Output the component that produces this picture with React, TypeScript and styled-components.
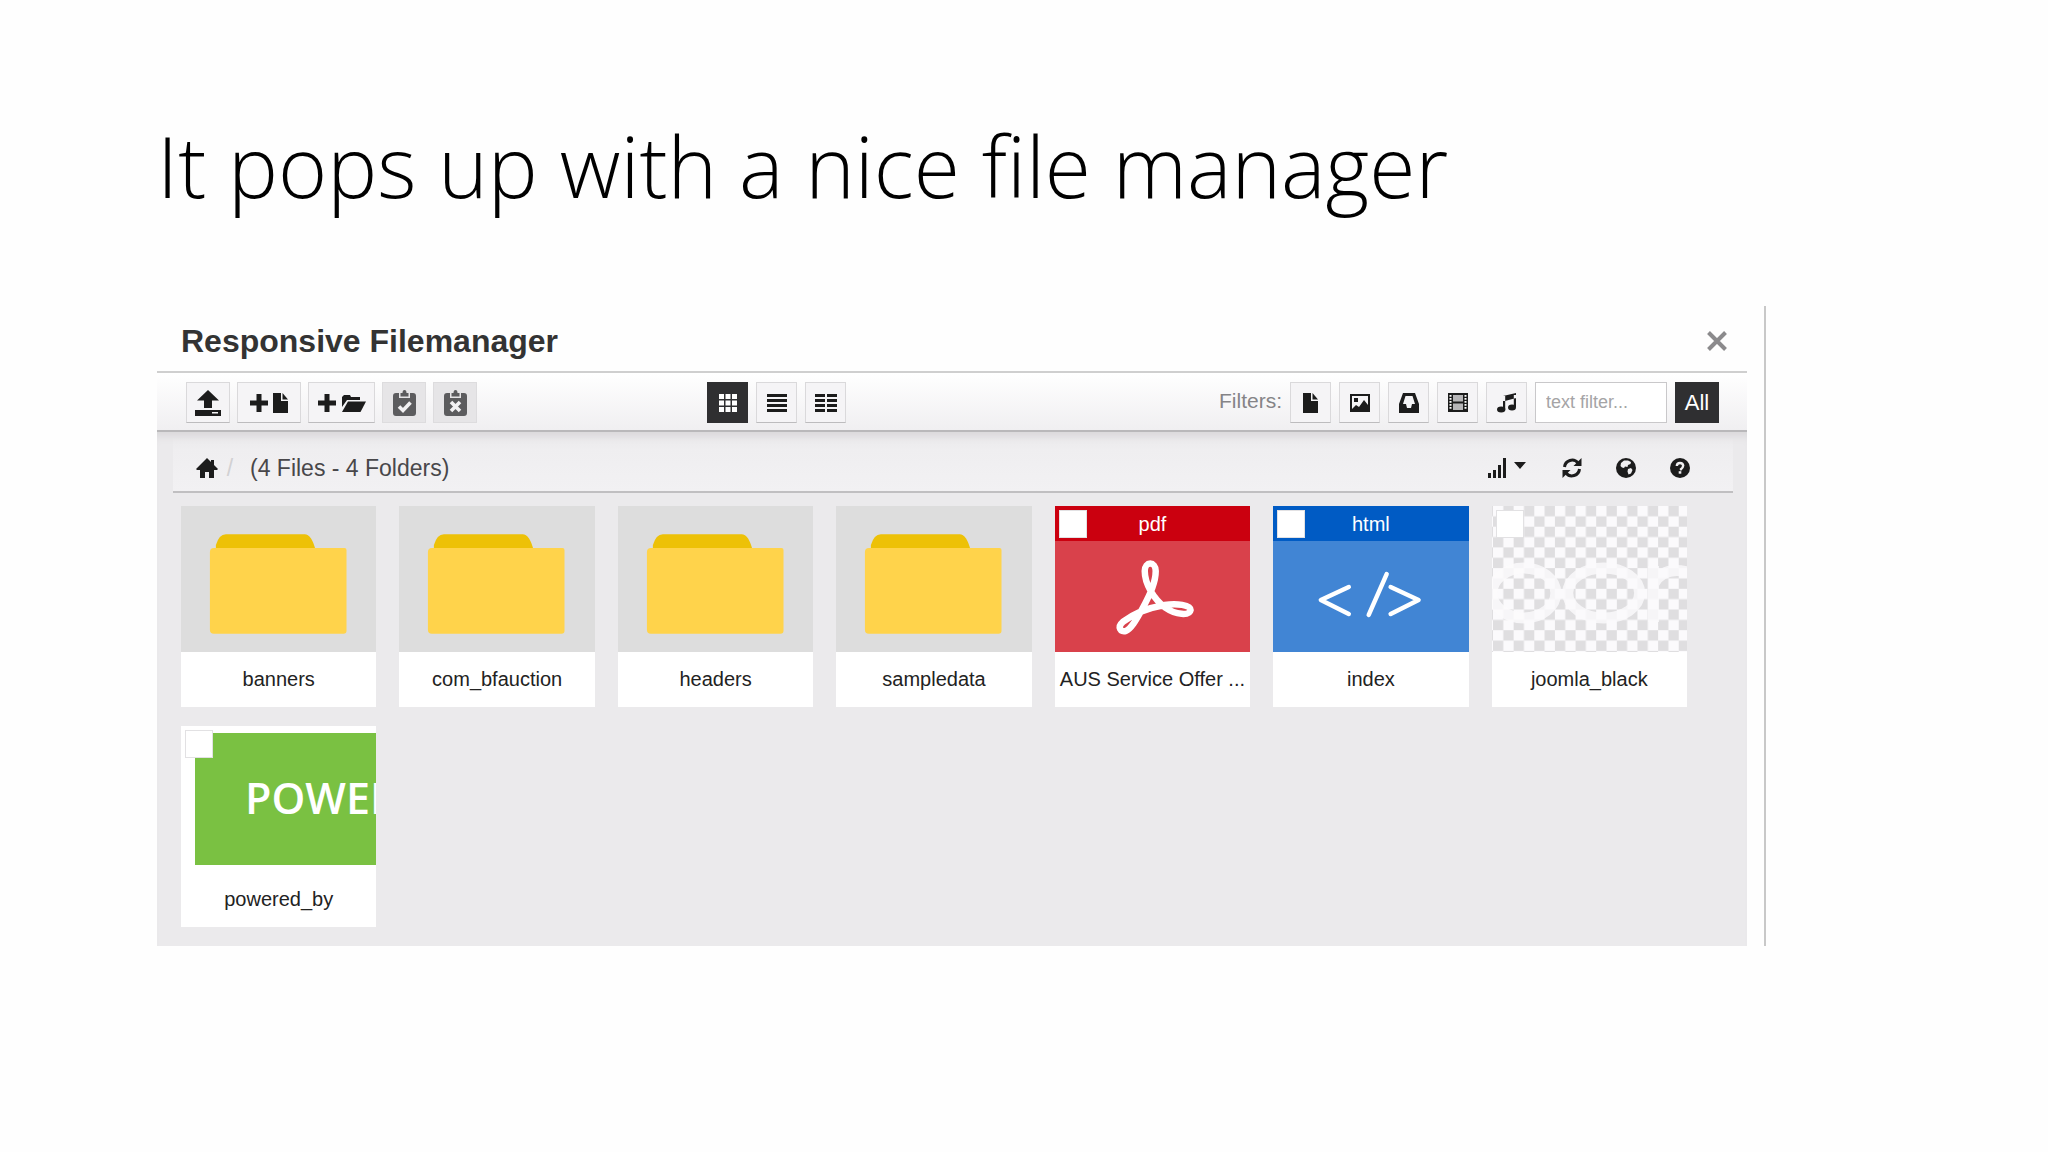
import React from 'react';
import styled, { createGlobalStyle, css } from 'styled-components';

const GlobalStyle = createGlobalStyle`
  *, *::before, *::after { box-sizing: border-box; }
  body {
    margin: 0;
    background: #fefefe;
    font-family: 'Liberation Sans', Arial, sans-serif;
    color: #333;
  }
  button, input { font-family: inherit; margin: 0; }
`;

const Slide = styled.main`
  padding: 110px 282px 0 157px;
`;

const SlideTitle = styled.h1`
  margin: 0 0 84px;
  font-family: 'Open Sans', 'Noto Sans', sans-serif;
  font-weight: 340;
  font-size: 84px;
  line-height: 112px;
  color: #000;
  white-space: nowrap;
`;

const Dialog = styled.section`
  padding-right: 17px;
  border-right: 2px solid #c8c8c8;
`;

const DialogHeader = styled.header`
  display: flex;
  align-items: center;
  justify-content: space-between;
  height: 67px;
  padding: 4px 20px 0 24px;
  border-bottom: 2px solid #cfcfcf;
`;

const DialogTitle = styled.h2`
  margin: 0;
  font-size: 32px;
  line-height: 40px;
  font-weight: 700;
`;

const PlainButton = styled.button`
  display: flex;
  align-items: center;
  justify-content: center;
  gap: 6px;
  padding: 0;
  border: 0;
  background: none;
  color: #1c1c1c;
`;

const Toolbar = styled.div`
  display: grid;
  grid-template-columns: 34% auto 1fr;
  align-items: center;
  height: 59px;
  padding: 2px 28px 0 29px;
  background: linear-gradient(#fff, #f0eff1);
  border-bottom: 2px solid #b9b8ba;
`;

const Group = styled.div<{ $gap: number; $end?: boolean }>`
  display: flex;
  align-items: center;
  justify-content: ${(p) => (p.$end ? 'flex-end' : 'flex-start')};
  gap: ${(p) => p.$gap}px;
`;

const ToolButton = styled.button<{ $width?: number; $active?: boolean }>`
  display: flex;
  align-items: center;
  justify-content: center;
  gap: 5px;
  width: ${(p) => p.$width ?? 41}px;
  height: 41px;
  padding: 0;
  border: 1px solid #dad9db;
  border-bottom-color: #bdbcbe;
  background: #f5f4f6;
  color: #1c1c1c;
  font-size: 22px;
  &:disabled {
    background: #e6e5e7;
    border-color: #dddcde;
    color: #5c5c5e;
  }
  ${(p) =>
    p.$active &&
    css`
      background: #2f2f31;
      border-color: #2f2f31;
      color: #fff;
    `}
`;

const FilterLabel = styled.span`
  font-size: 21px;
  line-height: 28px;
  color: #858487;
  padding-bottom: 4px;
`;

const FilterInput = styled.input`
  width: 132px;
  height: 41px;
  padding: 0 10px;
  border: 1px solid #c9c8ca;
  border-radius: 0;
  background: #fff;
  font-size: 18px;
  color: #555;
  &::placeholder { color: #a5a4a6; opacity: 1; }
`;

const Browser = styled.div`
  background: #ebeaec;
  padding: 0 14px 19px 16px;
  box-shadow: inset 0 10px 8px -6px #d8d7d9;
`;

const Breadcrumb = styled.nav`
  display: flex;
  align-items: center;
  justify-content: space-between;
  height: 61px;
  padding: 13px 43px 0 23px;
  background: linear-gradient(#efeef000 10%, #efeef0 30%, #f2f1f3);
  border-bottom: 2px solid #c0bfc1;
`;

const HomeLink = styled.a`
  display: flex;
  color: #1c1c1c;
`;

const Slash = styled.span`
  width: 24px;
  text-align: center;
  font-size: 23px;
  color: #d2d1d3;
`;

const Summary = styled.span`
  font-size: 23px;
  line-height: 28px;
  padding-left: 8px;
  color: #48474a;
`;

const FileGrid = styled.ul`
  list-style: none;
  margin: 0;
  padding: 13px 46px 0 8px;
  display: grid;
  grid-template-columns: repeat(auto-fill, minmax(190px, 1fr));
  gap: 19px 23px;
`;

const Card = styled.li`
  position: relative;
  background: #fff;
`;

const Thumb = styled.div<{ $bg: string }>`
  display: flex;
  flex-direction: column;
  height: 146px;
  background: ${(p) => p.$bg};
  overflow: hidden;
  svg { display: block; width: 100%; height: 100%; min-height: 0; }
`;

const ExtBar = styled.div<{ $bg: string }>`
  flex: none;
  height: 35px;
  background: ${(p) => p.$bg};
  color: #fff;
  font-size: 20px;
  line-height: 36px;
  text-align: center;
`;

const CheckBox = styled.input`
  appearance: none;
  position: absolute;
  left: 4px;
  top: 4px;
  width: 28px;
  height: 28px;
  border: 1px solid #e2e1e3;
  background: #fff;
`;

const FileName = styled.label`
  display: block;
  height: 55px;
  line-height: 54px;
  font-size: 20px;
  text-align: center;
  white-space: nowrap;
  overflow: hidden;
  color: #222;
`;

const PoweredArt = styled.div`
  flex: 1;
  margin: 7px 0;
  border-left: 14px solid #fff;
  background: #7ac142;
  padding-left: 50px;
  font-family: 'Open Sans', 'Noto Sans', sans-serif;
  font-weight: 600;
  font-size: 43px;
  line-height: 130px;
  color: #fff;
  white-space: nowrap;
`;

type GlyphProps = { w?: number; h?: number; box?: string; children: React.ReactNode };

const Glyph = ({ w = 20, h = 20, box = '0 0 20 20', children }: GlyphProps) => (
  <svg width={w} height={h} viewBox={box} fill="currentColor" aria-hidden="true">
    {children}
  </svg>
);

const UploadIcon = () => (
  <Glyph w={26} h={26} box="0 0 26 26">
    <path d="M13 0 24 10.500H17V18H9V10.500H2z" />
    <path fillRule="evenodd" d="M0 20h26v6H0zM17 22v1.500h6V22z" />
  </Glyph>
);
const PlusIcon = () => (
  <Glyph w={18} h={20} box="0 0 18 20">
    <path d="M6.500 1h5v6.500H18v5h-6.500V19h-5v-6.500H0v-5h6.500z" />
  </Glyph>
);
const FileIcon = () => (
  <Glyph w={15} h={20} box="0 0 15 20">
    <path d="M0 0h8v8h7v12H0z" />
    <path d="M9.500 0 15 6.500H9.500z" />
  </Glyph>
);
const FolderOpenIcon = () => (
  <Glyph w={25} h={18} box="0 0 25 18">
    <path d="M1 13V3l2-2h6l1 2h9v3H6z" />
    <path d="M7 7.500h18L19.500 18H1z" />
  </Glyph>
);
const ClipboardIcon = ({ mark }: { mark: 'check' | 'cross' }) => (
  <Glyph w={23} h={26} box="0 0 23 26">
    <path d="M3 3h3v5h11V3h3q3 0 3 3v17q0 3-3 3H3q-3 0-3-3V6q0-3 3-3z" />
    <path d="M7.500 3h2q0-3 2-3t2 3h2v3.500h-8z" />
    <path
      d={mark === 'check' ? 'M6 16.500l4 4 7.500-8' : 'M7 12l9 9M16 12l-9 9'}
      fill="none"
      stroke="#f2f1f3"
      strokeWidth="3.600"
    />
  </Glyph>
);
const GridIcon = () => (
  <Glyph w={18} h={18} box="0 0 18 18">
    {[0, 6.5, 13].map((y) => [0, 6.5, 13].map((x) => <rect key={`${x}-${y}`} x={x} y={y} width="5" height="5" />))}
  </Glyph>
);
const ListIcon = () => (
  <Glyph w={20} h={18} box="0 0 20 18">
    {[0, 5, 10, 15].map((y) => <rect key={y} y={y} width="20" height="3" />)}
  </Glyph>
);
const ColumnsIcon = () => (
  <Glyph w={22} h={18} box="0 0 22 18">
    {[0, 5, 10, 15].map((y) => <path key={y} d={`M0 ${y}h10v3H0zM12 ${y}h10v3H12z`} />)}
  </Glyph>
);
const PictureIcon = () => (
  <Glyph w={20} h={18} box="0 0 20 18">
    <path fillRule="evenodd" d="M0 0h20v18H0zM2 2v13l4-4 3 2 5-7 4 5V2z" />
    <rect x="4" y="4" width="4" height="4" />
  </Glyph>
);
const InboxIcon = () => (
  <Glyph w={20} h={20} box="0 0 20 20">
    <path fillRule="evenodd" d="M4 0h12l4 11v9H0v-9zM6.500 3 4 11h3l1 4h4l1-4h3l-2.500-8z" />
  </Glyph>
);
const FilmIcon = () => (
  <Glyph w={20} h={19} box="0 0 20 19">
    <path d="M0 0h20v19H0z" />
    <path fill="#b7b6b8" d="M5 2h10v6.500H5zM5 10.500h10V17H5z" />
    {[2, 5, 8, 11, 14].map((y) => <path key={y} fill="#fff" d={`M1.500 ${y}h2v1.800h-2zM16.500 ${y}h2v1.800h-2z`} />)}
  </Glyph>
);
const MusicIcon = () => (
  <Glyph w={19} h={20} box="0 0 19 20">
    <path fillRule="evenodd" d="M6 3 19 0v5L8 8H6zM6 3h2.200v13H6zM16.800 2H19v12h-2.200z" />
    <ellipse cx="4.200" cy="16.500" rx="4.200" ry="3" />
    <ellipse cx="15" cy="14.500" rx="4" ry="3" />
  </Glyph>
);
const HomeIcon = () => (
  <Glyph w={22} h={20} box="0 0 22 20">
    <path d="M11 0 15 4V2h3v5l4 4-1 1h-3v8h-5v-6H9v6H4v-8H1l-1-1z" />
  </Glyph>
);
const SortIcon = () => (
  <Glyph w={40} h={20} box="0 0 40 20">
    <path d="M0 15h3v5H0zM5 12h3v8H5zM10 7h3v13h-3zM15 0h3v20h-3zM26 4h12l-6 7z" />
  </Glyph>
);
const RefreshIcon = () => (
  <Glyph>
    <path d="M2.500 9A7.600 7.600 0 0 1 16 5M17.500 11A7.600 7.600 0 0 1 4 15" fill="none" stroke="currentColor" strokeWidth="3" />
    <path d="M19.500 0v8h-8zM.5 20v-8h8z" />
  </Glyph>
);
const GlobeIcon = () => (
  <Glyph>
    <circle cx="10" cy="10" r="10" />
    <path fill="#f0eff1" d="M8 2.500h4l3 1.500-.5 2-2.500 1-.5 2-2.500-.5-1 1.500-2-.5L4.500 8 5 5zM12 11l3-1 1.500 2-1.500 3.500-2.500 1-1-3z" />
  </Glyph>
);
const HelpIcon = () => (
  <Glyph>
    <circle cx="10" cy="10" r="10" />
    <path d="M6.800 8Q7 5 10 5t3.200 2.700Q13.200 9.500 10.200 12" fill="none" stroke="#f0eff1" strokeWidth="2.400" />
    <path fill="#f0eff1" d="M8.700 13.200h2.600v2.500H8.700z" />
  </Glyph>
);
const CloseIcon = () => (
  <Glyph>
    <path d="M1.500 1.500l17 17M18.500 1.500l-17 17" stroke="#8b8a8c" strokeWidth="4" />
  </Glyph>
);

const FolderArt = () => (
  <svg viewBox="0 0 196 146" aria-hidden="true">
    <path fill="#edc107" d="M35 44V39Q38 28 45 28H124Q131 28 135 44z" />
    <path fill="#ffd34b" d="M33 42H164Q166 42 166 44V125Q166 128 163 128H33Q29 128 29 124V46Q29 42 33 42z" />
  </svg>
);

const PdfArt = () => (
  <svg viewBox="0 0 196 111" aria-hidden="true">
    <path
      fill="none"
      stroke="#fff"
      strokeWidth="6.500"
      strokeLinejoin="round"
      d="M90 30C90 20 101 20 101 30C101 41 96 52 88 67C81 80 76 88 71 90C66 92 62 86 68 81C77 74 93 67 110 64C122 62 136 64 136 69C135 75 121 74 111 67C99 58 90 43 90 30z"
    />
  </svg>
);

const CodeArt = () => (
  <svg viewBox="0 0 196 111" aria-hidden="true">
    <path
      d="M76 46 48 59 76 73M114 33 96 74M118 46 146 59 118 73"
      fill="none"
      stroke="#fff"
      strokeWidth="4.500"
      strokeLinecap="round"
      strokeLinejoin="round"
    />
  </svg>
);

const TransparentArt = () => (
  <svg viewBox="0 0 196 146" preserveAspectRatio="none" aria-hidden="true">
    <defs>
      <pattern id="checker" width="20.700" height="20.700" patternUnits="userSpaceOnUse" x="1" y="0">
        <rect width="20.700" height="20.700" fill="#fbfafc" />
        <path fill="#dfdee0" d="M0 10.350h10.350v10.350H0zM10.350 0h10.350v10.350H10.350z" />
      </pattern>
    </defs>
    <rect width="196" height="146" fill="url(#checker)" />
    <g fill="none" stroke="#fbfafc" strokeWidth="11" opacity="0.850">
      <ellipse cx="32" cy="87" rx="32" ry="25" />
      <ellipse cx="112" cy="87" rx="36" ry="25" />
      <path d="M162 116V60M162 78Q172 60 196 66" />
    </g>
  </svg>
);

type Entry = {
  name: string;
  bg: string;
  art: React.ReactNode;
  selectable?: boolean;
  ext?: { label: string; color: string };
};

const folder = (name: string): Entry => ({ name, bg: '#dddddd', art: <FolderArt /> });

const entries: Entry[] = [
  folder('banners'),
  folder('com_bfauction'),
  folder('headers'),
  folder('sampledata'),
  { name: 'AUS Service Offer ...', bg: '#d9414b', art: <PdfArt />, selectable: true, ext: { label: 'pdf', color: '#cb000f' } },
  { name: 'index', bg: '#4185d4', art: <CodeArt />, selectable: true, ext: { label: 'html', color: '#005bc4' } },
  { name: 'joomla_black', bg: '#fff', art: <TransparentArt />, selectable: true },
  { name: 'powered_by', bg: '#fff', art: <PoweredArt>POWER</PoweredArt>, selectable: true },
];

const FileCard = ({ entry }: { entry: Entry }) => {
  const id = `file-${entry.name.replace(/\W+/g, '-')}`;
  return (
    <Card>
      <Thumb $bg={entry.bg}>
        {entry.ext && <ExtBar $bg={entry.ext.color}>{entry.ext.label}</ExtBar>}
        {entry.art}
      </Thumb>
      {entry.selectable && <CheckBox type="checkbox" id={id} />}
      <FileName as={entry.selectable ? 'label' : 'div'} htmlFor={entry.selectable ? id : undefined}>
        {entry.name}
      </FileName>
    </Card>
  );
};

export default function App() {
  return (
    <>
      <GlobalStyle />
      <Slide>
        <SlideTitle>It pops up with a nice file manager</SlideTitle>
        <Dialog>
          <DialogHeader>
            <DialogTitle>Responsive Filemanager</DialogTitle>
            <PlainButton aria-label="Close"><CloseIcon /></PlainButton>
          </DialogHeader>
          <Toolbar>
            <Group $gap={7}>
              <ToolButton $width={44} aria-label="Upload"><UploadIcon /></ToolButton>
              <ToolButton $width={64} aria-label="New file"><PlusIcon /><FileIcon /></ToolButton>
              <ToolButton $width={67} aria-label="New folder"><PlusIcon /><FolderOpenIcon /></ToolButton>
              <ToolButton $width={44} disabled aria-label="Paste"><ClipboardIcon mark="check" /></ToolButton>
              <ToolButton $width={44} disabled aria-label="Clear clipboard"><ClipboardIcon mark="cross" /></ToolButton>
            </Group>
            <Group $gap={8}>
              <ToolButton $active aria-label="Grid view"><GridIcon /></ToolButton>
              <ToolButton aria-label="List view"><ListIcon /></ToolButton>
              <ToolButton aria-label="Column view"><ColumnsIcon /></ToolButton>
            </Group>
            <Group $gap={8} $end>
              <FilterLabel>Filters:</FilterLabel>
              <ToolButton aria-label="Files"><FileIcon /></ToolButton>
              <ToolButton aria-label="Images"><PictureIcon /></ToolButton>
              <ToolButton aria-label="Archives"><InboxIcon /></ToolButton>
              <ToolButton aria-label="Videos"><FilmIcon /></ToolButton>
              <ToolButton aria-label="Music"><MusicIcon /></ToolButton>
              <FilterInput type="text" placeholder="text filter..." aria-label="Text filter" />
              <ToolButton $width={44} $active>All</ToolButton>
            </Group>
          </Toolbar>
          <Browser>
            <Breadcrumb>
              <Group $gap={0}>
                <HomeLink href="#" aria-label="Home"><HomeIcon /></HomeLink>
                <Slash>/</Slash>
                <Summary>(4 Files - 4 Folders)</Summary>
              </Group>
              <Group $gap={34}>
                <PlainButton aria-label="Sort"><SortIcon /></PlainButton>
                <PlainButton aria-label="Refresh"><RefreshIcon /></PlainButton>
                <PlainButton aria-label="Language"><GlobeIcon /></PlainButton>
                <PlainButton aria-label="Help"><HelpIcon /></PlainButton>
              </Group>
            </Breadcrumb>
            <FileGrid>
              {entries.map((entry) => <FileCard key={entry.name} entry={entry} />)}
            </FileGrid>
          </Browser>
        </Dialog>
      </Slide>
    </>
  );
}
